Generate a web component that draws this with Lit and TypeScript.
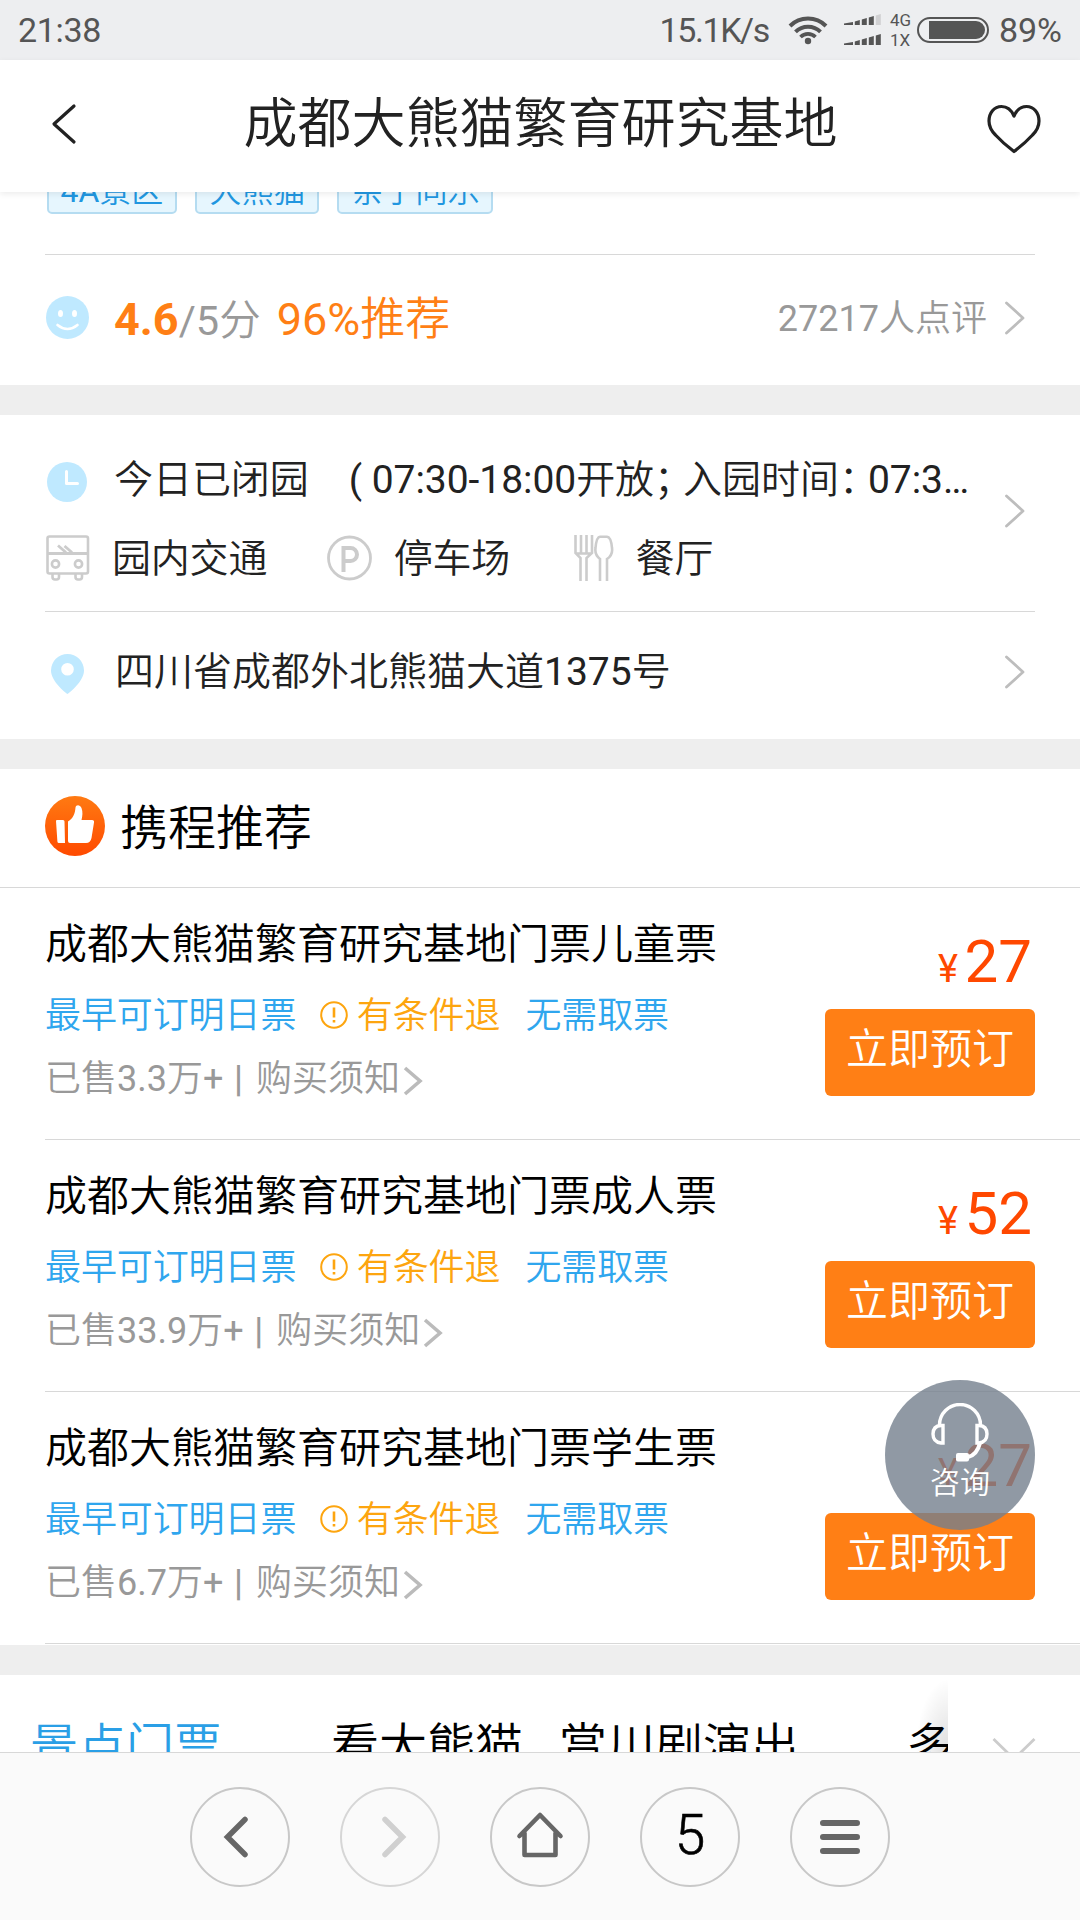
import { LitElement, html, svg, css } from "lit";
import { customElement, property } from "lit/decorators.js";

const chevron = html`<svg class="chev" width="22" height="34" viewBox="0 0 22 34" fill="none" stroke="#bdbdbd" stroke-width="2.8" stroke-linecap="round" stroke-linejoin="round"><path d="M2.5 2 L19 17 L2.5 32"/></svg>`;

// Latin letters and digits use the regular weight next to the lighter Chinese text.
const base = css`
  * { box-sizing: border-box; }
  svg { display: block; flex: none; }
  .n { font-weight: 400; }
`;

@customElement("status-bar")
class StatusBar extends LitElement {
  static styles = [base, css`
    :host { display: flex; align-items: center; flex: none; height: 60px; background: #edeef0; color: #555; font-size: 34px; font-weight: 400; line-height: 1; padding: 0 18px 0 18px; }
    .time { flex: 1; letter-spacing: -0.3px; }
    .speed { letter-spacing: -1.4px; margin-right: 19px; }
    .signal { margin-left: 16px; }
    .net { display: flex; flex-direction: column; gap: 3px; font-size: 17px; line-height: 17px; width: 24px; margin-left: 8px; margin-right: 3px; }
    .pct { margin-left: 10px; }
  `];
  bars(y: number, dim: boolean) {
    return [0, 1, 2, 3, 4].map((i) => {
      const w = i === 0 ? 9 : 5;
      const h = [3, 5, 7, 9, 11][i];
      const x = i === 0 ? 0 : 3.8 + i * 7;
      return svg`<path d="M${x} ${y} V${y - h + 1.5} L${x + w} ${y - h} V${y} Z" fill=${dim && i === 4 ? "#d0d0d2" : "#555"}></path>`;
    });
  }
  render() {
    return html`
      <span class="time">21:38</span>
      <span class="speed">15.1K/s</span>
      <svg width="40" height="30" viewBox="0 0 40 30" fill="none" stroke="#555" stroke-width="4">
        <path d="M2 11 A25.5 25.5 0 0 1 38 11"/><path d="M7.5 16.8 A17.8 17.8 0 0 1 32.5 16.8"/><path d="M12.5 22 A10.6 10.6 0 0 1 27.5 22" stroke-width="3.6"/><circle cx="20" cy="26" r="3.2" fill="#555" stroke="none"/>
      </svg>
      <svg class="signal" width="38" height="32" viewBox="0 0 38 32">${this.bars(11, true)}${this.bars(31, false)}</svg>
      <span class="net"><span>4G</span><span>1X</span></span>
      <svg width="72" height="26" viewBox="0 0 72 26"><rect x="1" y="1" width="70" height="24" rx="12" fill="none" stroke="#555" stroke-width="2"/><path d="M12 4 H59 A9 9 0 0 1 59 22 H12 Z" fill="#555"/></svg>
      <span class="pct">89%</span>`;
  }
}

@customElement("title-bar")
class TitleBar extends LitElement {
  static styles = [base, css`
    :host { display: flex; align-items: center; justify-content: space-between; flex: none; height: 132px; padding: 0 39px 0 51px; background: #fff; box-shadow: 0 2px 6px rgba(0,0,0,.08); z-index: 2; color: #222; }
    .title { font-size: 54px; line-height: 1; padding: 0 0 2px 17px; }
    .back { margin-bottom: 4px; }
    .fav { margin-top: 5px; }
  `];
  render() {
    return html`
      <svg class="back" width="26" height="42" viewBox="0 0 26 42" fill="none" stroke="#222" stroke-width="3.2" stroke-linecap="round" stroke-linejoin="round"><path d="M23 3 L3 21 L23 39"/></svg>
      <span class="title">成都大熊猫繁育研究基地</span>
      <svg class="fav" width="54" height="50" viewBox="0 0 54 50" fill="none" stroke="#222" stroke-width="3.2" stroke-linejoin="round" stroke-linecap="round"><path d="M27 12 C24 5 19 2.5 14.5 2.5 C7 2.5 2 9 2 17 C2 22 4.5 27 8.5 31 C14 37 21 43 27 47.5 C33 43 40 37 45.5 31 C49.5 27 52 22 52 17 C52 9 47 2.5 39.5 2.5 C35 2.5 30 5 27 12 Z"/></svg>`;
  }
}

@customElement("attraction-info")
class AttractionInfo extends LitElement {
  static styles = [base, css`
    :host { display: block; color: #222; font-size: 39px; line-height: 1; white-space: nowrap; }
    .tags { display: flex; align-items: flex-end; gap: 18px; height: 62px; padding: 0 46.5px 40px; }
    .tag { flex: none; height: 48px; line-height: 46px; padding: 0 12px; border: 2px solid #b5dcf1; border-radius: 5px; background: #e6f6fe; color: #2196e0; font-size: 32px; }
    .line { height: 1px; margin: 0 45px; background: #d8d8d8; }
    .gap { height: 30px; background: #eee; }
    .row { display: flex; align-items: center; padding: 0 54px 0 46px; }
    .grow { flex: 1; }
    .score { height: 130px; padding-bottom: 4px; }
    .face { margin-bottom: 1px; }
    .rate { display: flex; align-items: baseline; margin-left: 25px; padding-top: 2px; font-size: 45px; color: #ff7f15; }
    .rate b { font-weight: 700; }
    .max { font-size: 41.5px; color: #999; margin-right: 16px; }
    .reviews { font-size: 36px; color: #999; margin-right: 17px; padding-top: 1px; }
    .hours { height: 196px; padding-bottom: 5px; }
    .hours .grow { padding-top: 16px; }
    .when { display: flex; align-items: center; height: 50px; margin-bottom: 31px; letter-spacing: -0.05px; }
    .when svg { margin: 3px 27px 0 1px; }
    .pause { letter-spacing: -10px; }
    .open { margin-left: 40px; }
    .fac { display: flex; align-items: center; height: 46px; }
    .fac svg { margin-bottom: 2px; }
    .fac span { margin: 0 59.500px 0 22px; letter-spacing: -0.2px; }
    .dining { margin-left: 4px; }
    .addr { height: 127px; padding-bottom: 7px; }
    .addr .pin { margin: 4px 31px 0 5px; }
  `];
  render() {
    return html`
      <div class="tags"><span class="tag"><span class="n">4A</span>景区</span><span class="tag">大熊猫</span><span class="tag">亲子同乐</span></div>
      <div class="line"></div>
      <div class="row score">
        <svg class="face" width="43" height="43" viewBox="0 0 43 43"><circle cx="21.5" cy="21.5" r="21.5" fill="#bfe9ff"/><ellipse cx="14.5" cy="17.5" rx="2.5" ry="3.5" fill="#fff"/><ellipse cx="28.5" cy="17.5" rx="2.5" ry="3.5" fill="#fff"/><path d="M11.5 29 Q21.5 37 31.5 29" fill="none" stroke="#fff" stroke-width="2.6" stroke-linecap="round"/></svg>
        <span class="rate"><b>4.6</b><span class="max"><span class="n">/5</span>分</span><span><span class="n">96%</span>推荐</span></span>
        <span class="grow"></span><span class="reviews"><span class="n">27217</span>人点评</span>${chevron}
      </div>
      <div class="gap"></div>
      <div class="row hours">
        <div class="grow">
          <div class="when">
            <svg width="40" height="40" viewBox="0 0 40 40"><circle cx="20" cy="20" r="20" fill="#bfe9ff"/><path d="M19.5 9.5 V21.5 H30.5" fill="none" stroke="#fff" stroke-width="3" stroke-linecap="round" stroke-linejoin="round"/></svg>
            <span>今日已闭园</span><span class="open"><span class="n">( 07:30-18:00</span>开放<span class="pause n">；</span>入园时间<span class="pause n">：</span><span class="n">07:3…</span></span>
          </div>
          <div class="fac">
            <svg width="44" height="46" viewBox="0 0 44 46" fill="none" stroke="#ccc" stroke-width="2.6"><rect x="1.5" y="1.5" width="40.5" height="37" rx="2"/><path d="M1.5 18.5 H42 M12 10.5 L20 17.5 M18.5 11 L26 17.5" stroke-width="2.8"/><circle cx="9.5" cy="29" r="3.6"/><circle cx="32.5" cy="29" r="3.6"/><path d="M6.5 38.5 V42 Q6.5 44.5 9 44.5 H10.5 Q13 44.5 13 42 V38.5 M29.5 38.5 V42 Q29.5 44.5 32 44.5 H33.5 Q36 44.5 36 42 V38.5"/></svg>
            <span>园内交通</span>
            <svg width="45" height="46" viewBox="0 0 45 46" fill="none" stroke="#ccc"><circle cx="22.5" cy="23" r="21" stroke-width="2.8"/><path d="M16.5 37 V13 H23.5 A6.5 6.5 0 0 1 23.5 26 H16.5" stroke-width="4"/></svg>
            <span>停车场</span>
            <svg class="dining" width="40" height="46" viewBox="0 0 40 46" fill="none" stroke="#ccc" stroke-width="2.6"><path d="M1.5 0 V18 L6.5 23 V46 M18 0 V18 L12.5 23 V46 M7 0 V19 M12.5 0 V19 M1.5 18.5 H18"/><path d="M26 46 V24 Q20.5 20 21.5 13 Q22.5 2 26 1.8 H33 Q37 2 38 13 Q39 20 33 24 V46"/></svg>
            <span>餐厅</span>
          </div>
        </div>${chevron}
      </div>
      <div class="line"></div>
      <div class="row addr">
        <svg class="pin" width="33" height="40" viewBox="0 0 33 40"><path fill-rule="evenodd" fill="#bfe9ff" d="M16.5 0 A16.5 16.5 0 0 1 33 16.5 C33 26 22 36 16.5 40 C11 36 0 26 0 16.5 A16.5 16.5 0 0 1 16.5 0 Z M16.5 9 A6.3 6.3 0 1 0 16.5 21.6 A6.3 6.3 0 1 0 16.5 9 Z"/></svg>
        <span>四川省成都外北熊猫大道<span class="n">1375</span>号</span><span class="grow"></span>${chevron}
      </div>
      <div class="gap"></div>`;
  }
}

@customElement("ticket-item")
class TicketItem extends LitElement {
  @property() name = "";
  @property() sold = "";
  @property() price = "";
  static styles = [base, css`
    :host { display: flex; justify-content: space-between; height: 252px; margin-left: 45px; padding-right: 45px; border-bottom: 1px solid #d8d8d8; white-space: nowrap; line-height: 1; }
    .name { font-size: 42px; color: #000; margin: 36px 0 32px; }
    .notes { display: flex; align-items: center; font-size: 36px; color: #2fa6ee; height: 36px; letter-spacing: -0.1px; }
    .refund { display: flex; align-items: center; gap: 9px; color: #fda50f; margin: 0 25px 0 23.5px; }
    .refund svg { margin-bottom: 2px; }
    .sold { display: flex; align-items: center; font-size: 36px; height: 36px; margin-top: 27px; color: #999; }
    .sold svg { margin: 4px 0 0 3px; }
    .bar { margin: 0 13px 0 10.5px; font-weight: 500; }
    .buy { display: flex; flex-direction: column; align-items: flex-end; }
    .price { display: flex; align-items: baseline; gap: 6.5px; color: #ff4800; font-size: 60px; font-weight: 400; margin-top: 44px; padding-right: 3px; height: 77px; }
    .yen { font-size: 38px; }
    .book { width: 210px; height: 87px; border-radius: 6px; background: #ff7f15; color: #fff; font-size: 42px; line-height: 81px; text-align: center; }
  `];
  render() {
    return html`
      <div>
        <div class="name">${this.name}</div>
        <div class="notes"><span>最早可订明日票</span><span class="refund"><svg width="28" height="28" viewBox="0 0 28 28" fill="none" stroke="#fda50f" stroke-width="2"><circle cx="14" cy="14" r="12.8"/><path d="M14 6.5 V16.5 M14 19 V21.5" stroke-width="2.6"/></svg>有条件退</span><span>无需取票</span></div>
        <div class="sold"><span>已售<span class="n">${this.sold}</span>万<span class="n">+</span></span><span class="bar">|</span><span>购买须知</span><svg width="20" height="30" viewBox="0 0 20 30" fill="none" stroke="#bbb" stroke-width="3.6"><path d="M2 2 L17 15 L2 28"/></svg></div>
      </div>
      <div class="buy"><div class="price"><span class="yen">¥</span><span>${this.price}</span></div><div class="book">立即预订</div></div>`;
  }
}

@customElement("browser-nav")
class BrowserNav extends LitElement {
  static styles = [base, css`
    :host { display: flex; justify-content: center; gap: 50px; flex: none; height: 168px; padding-top: 34px; background: #fafafa; border-top: 1px solid #d8d8d8; z-index: 2; }
    .btn { display: flex; align-items: center; justify-content: center; width: 100px; height: 100px; border: 2px solid #c8c8c8; border-radius: 50%; font-size: 55px; line-height: 1; color: #000; }
    .off { border-color: #d6d6d6; }
    .count { padding-bottom: 3px; -webkit-text-stroke: 0.6px #000; }
  `];
  render() {
    return html`
      <div class="btn"><svg width="60" height="60" viewBox="0 0 60 60" fill="none" stroke="#666" stroke-width="5.5" stroke-linecap="round"><path d="M35 12.5 L17.5 30 L35 47.5"/></svg></div>
      <div class="btn off"><svg width="60" height="60" viewBox="0 0 60 60" fill="none" stroke="#d0d0d0" stroke-width="5.5" stroke-linecap="round"><path d="M25 12.5 L42.5 30 L25 47.5"/></svg></div>
      <div class="btn"><svg width="60" height="60" viewBox="0 0 60 60" fill="none" stroke="#666" stroke-width="4.6" stroke-linecap="round" stroke-linejoin="round"><path d="M9.5 29 L30 8 L50.5 29 M14.5 26 V48 H45.5 V26"/></svg></div>
      <div class="btn count">5</div>
      <div class="btn"><svg width="60" height="60" viewBox="0 0 60 60" stroke="#666" stroke-width="6" stroke-linecap="round"><path d="M13 16 H47 M13 30 H47 M13 44 H47"/></svg></div>`;
  }
}

@customElement("app-root")
class AppRoot extends LitElement {
  static styles = [base, css`
    :host { display: flex; flex-direction: column; width: 1080px; height: 1920px; overflow: hidden; background: #fff; font-family: Roboto, "Noto Sans CJK SC DemiLight", "Noto Sans CJK SC", sans-serif; font-weight: 350; }
    .scroll { flex: 1; min-height: 0; overflow: hidden; position: relative; }
    .head { display: flex; align-items: center; gap: 15px; height: 119px; padding: 0 45px 4px; border-bottom: 1px solid #d8d8d8; font-size: 48px; line-height: 1; color: #000; }
    .head span { padding-top: 5px; }
    .gap { height: 30px; margin-top: 1px; background: #eee; }
    .tabs { display: flex; height: 77px; }
    .names { display: flex; width: 948px; flex: none; overflow: hidden; padding: 48px 0 0 30px; font-size: 48px; line-height: 1; color: #000; white-space: nowrap; background: radial-gradient(ellipse 32px 72px at 948px 76px, rgba(0,0,0,.13), transparent); }
    .names span { flex: none; }
    .on { color: #2a9fe6; }
    .t2 { margin-left: 109px; }
    .t3 { margin-left: 36px; }
    .t4 { margin-left: 107px; }
    .more { margin: 62px 0 0 44px; }
    .chat { position: absolute; left: 885px; top: 1188px; width: 150px; height: 150px; border-radius: 50%; background: rgba(116,127,141,.8); color: #fff; font-size: 30px; line-height: 1; display: flex; flex-direction: column; align-items: center; padding-top: 23px; gap: 5px; }
  `];
  render() {
    const tickets = [["儿童票", "3.3", "27"], ["成人票", "33.9", "52"], ["学生票", "6.7", "27"]];
    return html`
      <status-bar></status-bar>
      <title-bar></title-bar>
      <div class="scroll">
        <attraction-info></attraction-info>
        <div class="head">
          <svg width="60" height="60" viewBox="0 0 60 60"><defs><linearGradient id="g" x1="0" y1="0" x2="0" y2="1"><stop offset="0" stop-color="#ff7a12"/><stop offset="1" stop-color="#ff4a00"/></linearGradient></defs><circle cx="30" cy="30" r="30" fill="url(#g)"/><path fill="#fff" d="M12 24 H18 Q19.5 24 19.5 25.5 L20 47 H14 Q12.5 47 12.4 45.5 L11 25 Q11 24 12 24 Z M23 25.5 C28 22.5 30 18 30.5 11.5 C31 8.5 35 8.5 36.5 12 C38 16 37.5 20 36.5 24 H47 Q49.5 24 49 26.5 L46.5 42 Q45.5 47 41 47 H25 Q23 47 23 45 Z"/></svg>
          <span>携程推荐</span>
        </div>
        ${tickets.map(([kind, s, p]) => html`<ticket-item name=${"成都大熊猫繁育研究基地门票" + kind} sold=${s} price=${p}></ticket-item>`)}
        <div class="gap"></div>
        <div class="tabs">
          <div class="names"><span class="on">景点门票</span><span class="t2">看大熊猫</span><span class="t3">赏川剧演出</span><span class="t4">多</span></div>
          <svg class="more" width="44" height="24" viewBox="0 0 44 24" fill="none" stroke="#ccc" stroke-width="2.8"><path d="M1.5 2 L22 22 L42.5 2"/></svg>
        </div>
        <div class="chat">
          <svg width="60" height="60" viewBox="0 0 60 60" fill="none" stroke="#fff" stroke-width="3.4"><path d="M9.5 22 A20.5 20.5 0 0 1 50.5 22"/><path d="M13 22.5 V40 H11 Q3 39 3 31 Q3 23 11 22.5 Z M47 22.5 V40 H49 Q57 39 57 31 Q57 23 49 22.5 Z"/><path d="M50 40 Q47 52 38 54" stroke-width="4"/><rect x="26" y="50" width="13" height="8.5" rx="2" fill="#fff" stroke="none"/></svg>
          <span>咨询</span>
        </div>
      </div>
      <browser-nav></browser-nav>`;
  }
}
